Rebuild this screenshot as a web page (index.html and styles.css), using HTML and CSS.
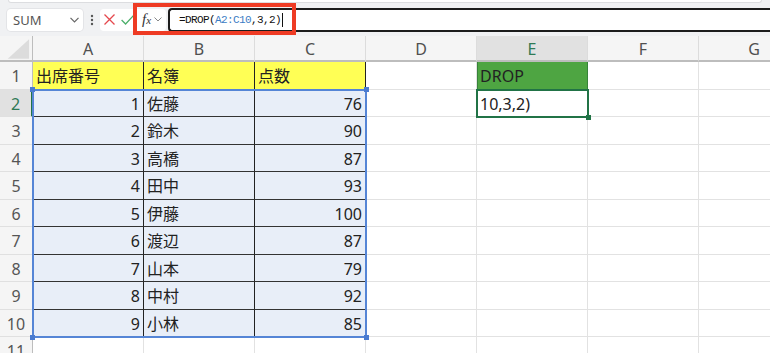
FILE: index.html
```html
<!DOCTYPE html>
<html lang="ja">
<head>
  <meta charset="UTF-8">
  <title>DROP関数</title>
  <link rel="stylesheet" href="styles.css">
</head>
<body>
<div class="ribbon-edge"></div>

<!-- 数式バー -->
<div class="formula-bar">
  <div class="name-box">
    <span>SUM</span>
    <svg width="9" height="6" viewBox="0 0 9 6"><polyline points="0.5,0.8 4.5,4.8 8.5,0.8" fill="none" stroke="#666" stroke-width="1.2"/></svg>
  </div>
  <div class="dots">
    <svg width="4" height="12" viewBox="0 0 4 12"><circle cx="2" cy="2" r="1.2" fill="#555"/><circle cx="2" cy="6" r="1.2" fill="#555"/><circle cx="2" cy="10" r="1.2" fill="#555"/></svg>
  </div>
  <div class="edit-box">
    <svg class="btn-cancel" width="11" height="11" viewBox="0 0 11 11"><path d="M0.5 0.5 L10.5 10.5 M10.5 0.5 L0.5 10.5" stroke="#e5484d" stroke-width="1.3"/></svg>
    <svg class="btn-enter" width="13" height="10" viewBox="0 0 13 10"><polyline points="0.6,5 4.6,9 12.4,0.6" fill="none" stroke="#4caf6a" stroke-width="1.3"/></svg>
    <span class="fx">f<small>x</small></span>
    <svg width="8" height="5" viewBox="0 0 8 5"><polyline points="0.5,0.5 4,4 7.5,0.5" fill="none" stroke="#888" stroke-width="1"/></svg>
  </div>
  <div class="formula-input">=DROP(<span class="ref">A2:C10</span>,3,2)<span class="caret"></span></div>

  <!-- 赤枠の注釈 -->
  <div class="callout"></div>
</div>

<!-- シート -->
<div class="sheet">
  <div class="cell corner"><svg width="33" height="24" viewBox="0 0 33 24"><polygon points="8,23 30,23 30,3" fill="#dcdcdc"/></svg></div>
  <div class="cell col-head">A</div>
  <div class="cell col-head">B</div>
  <div class="cell col-head">C</div>
  <div class="cell col-head">D</div>
  <div class="cell col-head current">E</div>
  <div class="cell col-head">F</div>
  <div class="cell col-head">G</div>

  <div class="cell row-head">1</div>
  <div class="cell tbl title">出席番号</div>
  <div class="cell tbl title">名簿</div>
  <div class="cell tbl title">点数</div>
  <div class="cell"></div>
  <div class="cell drop-head">DROP</div>
  <div class="cell"></div>
  <div class="cell"></div>

  <div class="cell row-head current">2</div>
  <div class="cell tbl sel num">1</div>
  <div class="cell tbl sel">佐藤</div>
  <div class="cell tbl sel num">76</div>
  <div class="cell"></div>
  <div class="cell">10,3,2)</div>
  <div class="cell"></div>
  <div class="cell"></div>

  <div class="cell row-head">3</div>
  <div class="cell tbl sel num">2</div>
  <div class="cell tbl sel">鈴木</div>
  <div class="cell tbl sel num">90</div>
  <div class="cell"></div>
  <div class="cell"></div>
  <div class="cell"></div>
  <div class="cell"></div>

  <div class="cell row-head">4</div>
  <div class="cell tbl sel num">3</div>
  <div class="cell tbl sel">高橋</div>
  <div class="cell tbl sel num">87</div>
  <div class="cell"></div>
  <div class="cell"></div>
  <div class="cell"></div>
  <div class="cell"></div>

  <div class="cell row-head">5</div>
  <div class="cell tbl sel num">4</div>
  <div class="cell tbl sel">田中</div>
  <div class="cell tbl sel num">93</div>
  <div class="cell"></div>
  <div class="cell"></div>
  <div class="cell"></div>
  <div class="cell"></div>

  <div class="cell row-head">6</div>
  <div class="cell tbl sel num">5</div>
  <div class="cell tbl sel">伊藤</div>
  <div class="cell tbl sel num">100</div>
  <div class="cell"></div>
  <div class="cell"></div>
  <div class="cell"></div>
  <div class="cell"></div>

  <div class="cell row-head">7</div>
  <div class="cell tbl sel num">6</div>
  <div class="cell tbl sel">渡辺</div>
  <div class="cell tbl sel num">87</div>
  <div class="cell"></div>
  <div class="cell"></div>
  <div class="cell"></div>
  <div class="cell"></div>

  <div class="cell row-head">8</div>
  <div class="cell tbl sel num">7</div>
  <div class="cell tbl sel">山本</div>
  <div class="cell tbl sel num">79</div>
  <div class="cell"></div>
  <div class="cell"></div>
  <div class="cell"></div>
  <div class="cell"></div>

  <div class="cell row-head">9</div>
  <div class="cell tbl sel num">8</div>
  <div class="cell tbl sel">中村</div>
  <div class="cell tbl sel num">92</div>
  <div class="cell"></div>
  <div class="cell"></div>
  <div class="cell"></div>
  <div class="cell"></div>

  <div class="cell row-head">10</div>
  <div class="cell tbl sel num">9</div>
  <div class="cell tbl sel">小林</div>
  <div class="cell tbl sel num">85</div>
  <div class="cell"></div>
  <div class="cell"></div>
  <div class="cell"></div>
  <div class="cell"></div>

  <div class="cell row-head">11</div>
  <div class="cell"></div>
  <div class="cell"></div>
  <div class="cell"></div>
  <div class="cell"></div>
  <div class="cell"></div>
  <div class="cell"></div>
  <div class="cell"></div>

  <!-- 参照範囲 A2:C10 の青枠 -->
  <div class="range">
    <span class="handle tl"></span>
    <span class="handle tr"></span>
    <span class="handle bl"></span>
    <span class="handle br"></span>
  </div>
  <!-- アクティブセル E2 -->
  <div class="active-cell"><span class="handle br"></span></div>
</div>
</body>
</html>
```

FILE: styles.css
```css
/* 全体 */
html, body {
  margin: 0;
  padding: 0;
  height: 100%;
  overflow: hidden;
  background: #f0f1f3;
  font-family: "Noto Sans", "Noto Sans CJK JP", sans-serif;
}

/* リボン下端 */
.ribbon-edge {
  height: 2px;
  margin: 0 8px;
  background: #fff;
  border: 1px solid #dcdde0;
  border-top: none;
  border-radius: 0 0 5px 5px;
}

/* 数式バー */
.formula-bar {
  position: relative;
  display: flex;
  align-items: center;
  height: 33px;
  padding-left: 7px;
}

.name-box {
  display: flex;
  align-items: center;
  justify-content: space-between;
  box-sizing: border-box;
  width: 76px;
  height: 22px;
  padding: 0 4px 0 6px;
  background: #fff;
  border-radius: 4px;
  box-shadow: 0 0 0 1px #e3e4e7;
  font-size: 13px;
  color: #555;
}

.dots {
  display: flex;
  justify-content: center;
  width: 17px;
}

.edit-box {
  display: flex;
  align-items: center;
  box-sizing: border-box;
  width: 66px;
  height: 22px;
  padding-left: 4px;
  background: #fff;
  border-radius: 4px;
}
.btn-cancel { margin-right: 6px; }
.btn-enter { margin-right: 8px; }

.fx {
  font-family: "Liberation Serif", serif;
  font-style: italic;
  font-size: 15px;
  color: #333;
  margin-right: 3px;
}
.fx small { font-size: 11px; }

.formula-input {
  flex: 1;
  display: flex;
  align-items: center;
  box-sizing: border-box;
  height: 24px;
  margin-left: 2px;
  padding-left: 9px;
  background: #fff;
  border: 2px solid #1c1c1c;
  border-right: none;
  border-radius: 4px 0 0 4px;
  font-family: "Liberation Mono", monospace;
  font-size: 11px;
  letter-spacing: -0.6px;
  color: #111;
}
.formula-input .ref { color: #3b7cc4; }
.caret {
  display: inline-block;
  width: 1px;
  height: 14px;
  margin-left: 1px;
  background: #111;
}

.callout {
  position: absolute;
  left: 133px;
  top: 0;
  width: 163px;
  height: 32px;
  box-sizing: border-box;
  border: 4px solid #ee3b24;
  pointer-events: none;
}

/* シート */
.sheet {
  position: relative;
  display: grid;
  grid-template-columns: 33px repeat(7, 111px);
  grid-template-rows: 26px repeat(11, 27.5px);
  background: #fff;
}

.cell {
  display: flex;
  align-items: center;
  box-sizing: border-box;
  padding: 2px 3px 0;
  border-right: 1px solid #e2e2e2;
  border-bottom: 1px solid #e2e2e2;
  font-size: 16px;
  line-height: 1;
  color: #222;
  white-space: nowrap;
  overflow: hidden;
}
.num { justify-content: flex-end; }

.corner {
  padding: 0;
  background: #f5f5f5;
  border-right: 1px solid #bdbdbd;
  border-bottom: 2px solid #bdbdbd;
}

.col-head {
  justify-content: center;
  background: #f5f5f5;
  color: #505050;
  border-right-color: #dcdcdc;
  border-bottom: 2px solid #bdbdbd;
}
.col-head.current {
  background: #e1e1e1;
  color: #2f7a55;
}

.row-head {
  justify-content: center;
  background: #f5f5f5;
  color: #555;
  border-right: 1px solid #bdbdbd;
  border-bottom-color: #e0e0e0;
}
.row-head.current {
  background: #e1e1e1;
  color: #2f7a55;
  border-right: 2px solid #217346;
}

/* 表 */
.tbl {
  border-right-color: #222;
  border-bottom-color: #333;
}
.title { background: #ffff55; }
.sel { background: #e8eef8; }

.drop-head {
  background: #4ea542;
  border-right-color: #37833a;
  border-bottom-color: #37833a;
  box-shadow: inset 1px 0 #37833a;
}

/* 選択枠 */
.range {
  position: absolute;
  left: 32px;
  top: 52.5px;
  width: 335px;
  height: 249.5px;
  box-sizing: border-box;
  border: 2px solid #5585d6;
  pointer-events: none;
}
.range .handle { background: #4a7bd0; }

.active-cell {
  position: absolute;
  left: 476px;
  top: 52.5px;
  width: 113px;
  height: 29.5px;
  box-sizing: border-box;
  border: 2px solid #217346;
  pointer-events: none;
}
.active-cell .handle { background: #217346; }

.handle {
  position: absolute;
  width: 5px;
  height: 5px;
}
.handle.tl { left: -4px; top: -4px; }
.handle.tr { right: -4px; top: -4px; }
.handle.bl { left: -4px; bottom: -4px; }
.handle.br { right: -4px; bottom: -4px; }
```
